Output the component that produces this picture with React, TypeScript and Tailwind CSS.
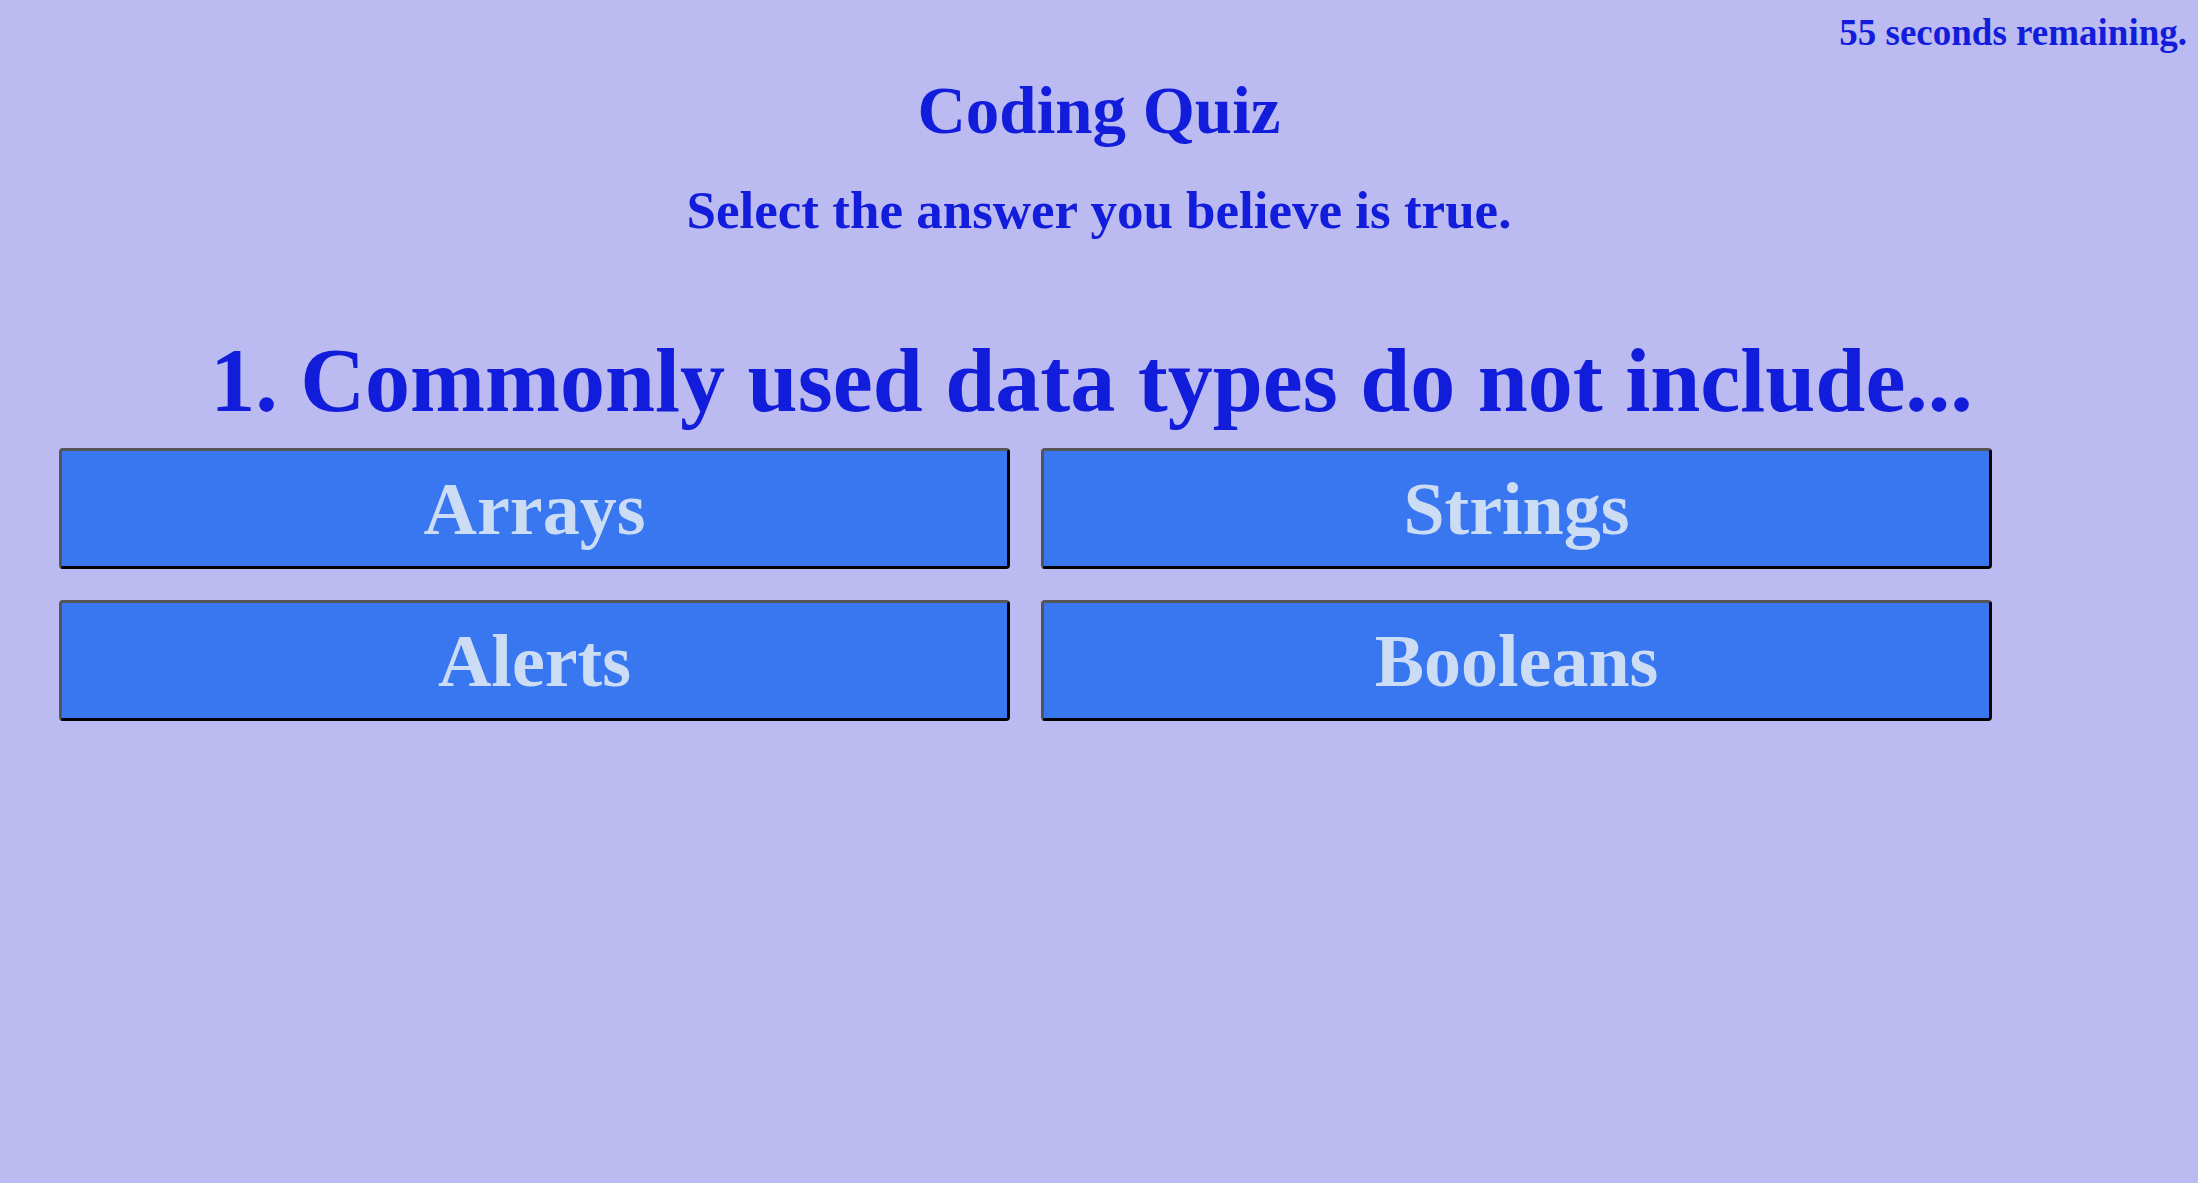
import React from 'react';

const answers = ['Arrays', 'Strings', 'Alerts', 'Booleans'];

const App: React.FC = () => {
  return (
    <div className="min-h-screen w-full bg-[#bbbbf1] text-[#121ddb] font-['Liberation_Serif','Times_New_Roman',serif] font-bold">
      <header className="pt-[14px] pr-[11px] text-right text-[37px] leading-none">
        <span>55 seconds remaining.</span>
      </header>

      <h1 className="mt-[26px] text-center text-[67px] leading-none">Coding Quiz</h1>
      <p className="mt-[40px] text-center text-[53px] leading-none">Select the answer you believe is true.</p>

      <main className="mt-[99px]">
        <h2 className="pr-[15px] text-center text-[90px] leading-none">1. Commonly used data types do not include...</h2>

        <div className="mt-[22px] ml-[59px] grid w-[1933px] grid-cols-2 gap-[31px]">
          {answers.map((a) => (
            <button
              key={a}
              className="h-[121px] rounded-[4px] border-[3px] border-t-[#555555] border-l-[#555555] border-b-black border-r-black bg-[#3877f0] text-[74px] leading-none text-[#cbdcf4]"
            >
              {a}
            </button>
          ))}
        </div>
      </main>
    </div>
  );
};

export default App;
